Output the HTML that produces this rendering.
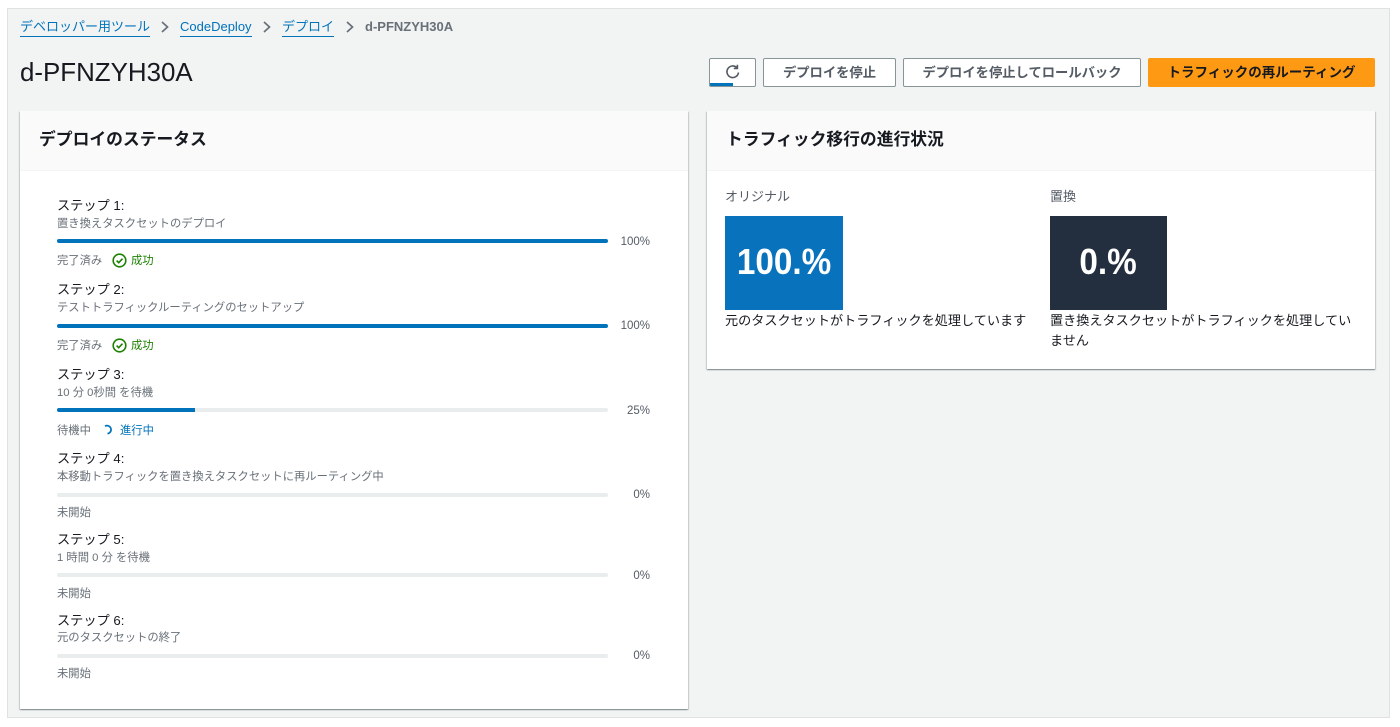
<!DOCTYPE html>
<html lang="ja"><head><meta charset="utf-8"><title>d-PFNZYH30A</title>
<style>
html,body{margin:0;padding:0;background:#fff}
body{width:1400px;height:727px;position:relative;overflow:hidden;font-family:"Liberation Sans","Noto Sans CJK JP",sans-serif;color:#16191f}
.a{position:absolute;white-space:nowrap}
#frame{position:absolute;left:7px;top:8px;width:1383px;height:710px;background:#f2f3f3;border:1px solid #e0e1e1;box-sizing:border-box}
.lnk{color:#0073bb;font-size:13px;line-height:18px;border-bottom:1px solid #0073bb;height:18px}
.card{position:absolute;background:#fff;box-shadow:0 1px 1px 0 rgba(0,28,36,.3),1px 1px 1px 0 rgba(0,28,36,.15),-1px 1px 1px 0 rgba(0,28,36,.15)}
.ch{position:absolute;left:0;top:0;right:0;height:59px;background:#fafafa;border-bottom:1px solid #f4f4f4}
.ht{font-size:16.8px;font-weight:700;line-height:24px;color:#16191f;margin-top:1px}
.btn{position:absolute;top:58px;height:29px;box-sizing:border-box;background:#fff;border:1px solid #879596;border-radius:2px;font-size:13.3px;font-weight:700;color:#545b64;text-align:center;line-height:27px;white-space:nowrap}
.t{font-size:13.2px;line-height:18px;color:#16191f;left:57px;margin-top:1px}
.d{font-size:11.3px;line-height:16px;color:#687078;left:57px;margin-top:1px}
.s{font-size:11.3px;line-height:16px;color:#687078;left:57px;margin-top:1px}
.bar{position:absolute;left:57px;width:551px;height:4px;background:#eaeded;border-radius:2px;overflow:hidden}
.bar i{display:block;height:100%;background:#0073bb}
.p{font-size:11.5px;line-height:16px;color:#545b64;right:750px;text-align:right;margin-top:1px}
.ok{font-size:11.3px;line-height:16px;color:#1d8102;left:131px;margin-top:1px}
.big{display:inline-block;transform:scaleX(.925);font-size:36px}
</style></head>
<body>
<div id="frame"></div>

<span class="a lnk" style="left:20px;top:18px">デベロッパー用ツール</span>
<svg class="a" style="left:159px;top:21px" width="12" height="12" viewBox="0 0 12 12"><path d="M3 1l5.5 5L3 11" fill="none" stroke="#687078" stroke-width="1.7"/></svg>
<span class="a lnk" style="left:180px;top:18px">CodeDeploy</span>
<svg class="a" style="left:261px;top:21px" width="12" height="12" viewBox="0 0 12 12"><path d="M3 1l5.5 5L3 11" fill="none" stroke="#687078" stroke-width="1.7"/></svg>
<span class="a lnk" style="left:282px;top:18px">デプロイ</span>
<svg class="a" style="left:344px;top:21px" width="12" height="12" viewBox="0 0 12 12"><path d="M3 1l5.5 5L3 11" fill="none" stroke="#687078" stroke-width="1.7"/></svg>
<span class="a" style="left:365px;top:18px;font-size:13px;line-height:18px;font-weight:700;color:#687078">d-PFNZYH30A</span>

<span class="a" style="left:20px;top:57px;font-size:25.9px;line-height:32px;color:#16191f">d-PFNZYH30A</span>

<div class="btn" style="left:709px;width:47px;overflow:hidden">
<svg style="position:absolute;left:15px;top:5px" width="16" height="16" viewBox="0 0 16 16"><path d="M13.5 8.5A5.8 5.8 0 1 1 11.8 3.6" fill="none" stroke="#545b64" stroke-width="1.6"/><path d="M12.4 0.8v3.6H8.8" fill="none" stroke="#545b64" stroke-width="1.6"/></svg>
<div style="position:absolute;left:0;bottom:0;width:23px;height:3px;background:#0073bb"></div>
</div>
<div class="btn" style="left:763px;width:133px">デプロイを停止</div>
<div class="btn" style="left:903px;width:238px">デプロイを停止してロールバック</div>
<div class="btn" style="left:1148px;width:227px;background:#fe9913;border-color:#fe9913;color:#16191f;font-size:13.5px">トラフィックの再ルーティング</div>

<div class="card" style="left:20px;top:111px;width:668px;height:598px"><div class="ch"></div></div>
<span class="a ht" style="left:39px;top:127px">デプロイのステータス</span>

<span class="a t" style="top:196px">ステップ 1:</span>
<span class="a d" style="top:215px">置き換えタスクセットのデプロイ</span>
<div class="bar" style="top:239px"><i style="width:100%"></i></div>
<span class="a p" style="top:233px">100%</span>
<span class="a s" style="top:252px">完了済み</span>
<svg class="a" style="left:112px;top:253px" width="15" height="15" viewBox="0 0 15 15"><circle cx="7.5" cy="7.5" r="6.3" fill="none" stroke="#1d8102" stroke-width="1.6"/><path d="M4.6 7.6l2.1 2.1 3.8-4" fill="none" stroke="#1d8102" stroke-width="1.6"/></svg>
<span class="a ok" style="top:252px">成功</span>

<span class="a t" style="top:280px">ステップ 2:</span>
<span class="a d" style="top:299px">テストトラフィックルーティングのセットアップ</span>
<div class="bar" style="top:324px"><i style="width:100%"></i></div>
<span class="a p" style="top:317px">100%</span>
<span class="a s" style="top:337px">完了済み</span>
<svg class="a" style="left:112px;top:338px" width="15" height="15" viewBox="0 0 15 15"><circle cx="7.5" cy="7.5" r="6.3" fill="none" stroke="#1d8102" stroke-width="1.6"/><path d="M4.6 7.6l2.1 2.1 3.8-4" fill="none" stroke="#1d8102" stroke-width="1.6"/></svg>
<span class="a ok" style="top:337px">成功</span>

<span class="a t" style="top:365px">ステップ 3:</span>
<span class="a d" style="top:384px">10 分 0秒間 を待機</span>
<div class="bar" style="top:408px"><i style="width:138px"></i></div>
<span class="a p" style="top:402px">25%</span>
<span class="a s" style="top:422px">待機中</span>
<svg class="a" style="left:103px;top:424px" width="12" height="12" viewBox="0 0 12 12"><path d="M2 2.2A4 4 0 1 1 4.5 9.6" fill="none" stroke="#0073bb" stroke-width="1.7"/></svg>
<span class="a ok" style="top:422px;left:120px;color:#0073bb">進行中</span>

<span class="a t" style="top:449px">ステップ 4:</span>
<span class="a d" style="top:468px">本移動トラフィックを置き換えタスクセットに再ルーティング中</span>
<div class="bar" style="top:493px"></div>
<span class="a p" style="top:486px">0%</span>
<span class="a s" style="top:504px">未開始</span>

<span class="a t" style="top:530px">ステップ 5:</span>
<span class="a d" style="top:549px">1 時間 0 分 を待機</span>
<div class="bar" style="top:573px"></div>
<span class="a p" style="top:567px">0%</span>
<span class="a s" style="top:585px">未開始</span>

<span class="a t" style="top:611px">ステップ 6:</span>
<span class="a d" style="top:629px">元のタスクセットの終了</span>
<div class="bar" style="top:654px"></div>
<span class="a p" style="top:647px">0%</span>
<span class="a s" style="top:665px">未開始</span>

<div class="card" style="left:707px;top:111px;width:668px;height:258px"><div class="ch"></div></div>
<span class="a ht" style="left:726px;top:127px">トラフィック移行の進行状況</span>

<span class="a" style="left:725px;top:188px;font-size:13px;line-height:18px;color:#545b64">オリジナル</span>
<div class="a" style="left:725px;top:216px;width:118px;height:94px;background:#0972bd;color:#fff;font-weight:700;line-height:92px;text-align:center"><span class="big">100.%</span></div>
<span class="a" style="left:725px;top:312px;font-size:13.13px;line-height:18px;color:#16191f">元のタスクセットがトラフィックを処理しています</span>

<span class="a" style="left:1050px;top:188px;font-size:13px;line-height:18px;color:#545b64">置換</span>
<div class="a" style="left:1050px;top:216px;width:117px;height:94px;background:#232f3e;color:#fff;font-weight:700;line-height:92px;text-align:center"><span class="big">0.%</span></div>
<div class="a" style="left:1050px;top:311px;font-size:13.13px;line-height:19.5px;color:#16191f">置き換えタスクセットがトラフィックを処理してい<br>ません</div>
</body></html>
